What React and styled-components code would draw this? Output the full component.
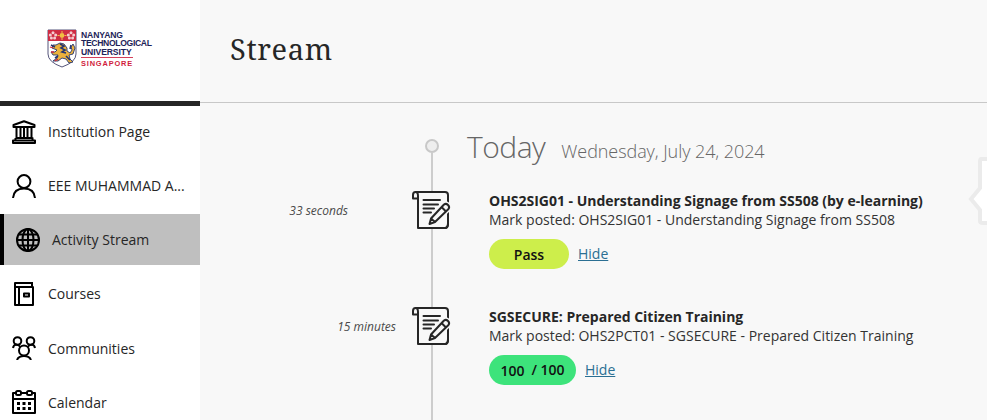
import React from "react";
import styled, { createGlobalStyle, css } from "styled-components";

const GlobalStyle = createGlobalStyle`
  * { box-sizing: border-box; }
  body { margin: 0; background: #f8f8f8; overflow: hidden; }
`;

const Page = styled.div`
  display: grid;
  grid-template-columns: 200px 1fr;
  width: 987px;
  height: 420px;
  overflow: hidden;
  position: relative;
  background: #f8f8f8;
  color: #262626;
  font-family: "Open Sans", "Noto Sans", sans-serif;
  font-size: 14px;
`;

const Sidebar = styled.aside`
  background: #fff;
  height: 420px;
  overflow: hidden;
`;

const Brand = styled.div`
  display: flex;
  height: 106px;
  padding: 29px 0 0 47px;
  gap: 4px;
  border-bottom: 5px solid #262626;
`;

const BrandText = styled.div`
  display: flex;
  flex-direction: column;
  align-items: flex-start;
  padding-top: 2px;
  color: #1d2358;
  font: 700 8.6px/8.3px "Liberation Sans", sans-serif;
  white-space: nowrap;
`;

const BrandLine = styled.span`
  letter-spacing: ${(p) => p.$spacing}px;
`;

const BrandCity = styled.span`
  margin-top: 1px;
  padding-top: 2px;
  border-top: 1px solid #d4405a;
  color: #d01c3c;
  font-size: 7.4px;
  letter-spacing: 0.85px;
  line-height: 8px;
`;

const Nav = styled.nav`
  display: flex;
  flex-direction: column;
  gap: 3.15px;
`;

const NavItem = styled.a`
  display: flex;
  flex: none;
  align-items: center;
  gap: 12px;
  height: 51px;
  padding-left: 12px;
  white-space: nowrap;
  ${(p) => p.$active && css`
    background: #bfbfbf;
    border-left: 4px solid #000;
  `}
`;

const NavLabel = styled.span``;

const LineIcon = styled.svg`
  flex: none;
  width: 24px;
  height: 24px;
  fill: none;
  stroke: #000;
  stroke-width: 2;
  stroke-linejoin: round;
`;

const Main = styled.main`
  display: flex;
  flex-direction: column;
`;

const Header = styled.header`
  height: 103px;
  padding: 29px 0 0 30px;
  border-bottom: 1px solid #c8c8c8;
`;

const Title = styled.h1`
  margin: 0;
  font: 400 29px/40px "Noto Serif", "DejaVu Serif", serif;
  font-stretch: condensed;
  letter-spacing: 0.65px;
`;

const Timeline = styled.section`
  position: relative;
  flex: 1;
  &::before {
    content: "";
    position: absolute;
    left: 231px;
    top: 50px;
    bottom: 0;
    width: 2px;
    background: #cdcdcd;
  }
`;

const DayRow = styled.div`
  display: flex;
  align-items: baseline;
  height: 86px;
  padding: 24px 0 0 225px;
  color: #666;
  font-weight: 300;
  white-space: nowrap;
`;

const DayDot = styled.span`
  position: relative;
  align-self: flex-start;
  width: 14px;
  height: 14px;
  margin: 12px 28px 0 0;
  border: 2px solid #c8c8c8;
  border-radius: 50%;
  background: #eee;
`;

const DayName = styled.span`
  font-size: 30px;
  line-height: 40px;
  letter-spacing: -0.5px;
`;

const DayDate = styled.span`
  margin-left: 16px;
  font-size: 18px;
  letter-spacing: -0.07px;
`;

const Entry = styled.article`
  display: grid;
  grid-template-columns: 196px 39px 1fr;
  height: 116px;
`;

const Age = styled.time`
  padding-right: ${(p) => (p.$early ? 48 : 0)}px;
  margin-top: 14px;
  font-size: 12px;
  font-style: italic;
  line-height: 16px;
  text-align: right;
  color: #4a4a4a;
`;

const EntryIcon = styled.svg`
  position: relative;
  width: 40px;
  height: 40px;
  margin: 1px 0 0 16px;
  fill: none;
  stroke: #262626;
  stroke-width: 2;
  stroke-linejoin: round;
  stroke-linecap: round;
`;

const EntryBody = styled.div`
  padding: 2px 0 0 54px;
  white-space: nowrap;
`;

const EntryTitle = styled.h2`
  margin: 0;
  font-size: 14px;
  font-weight: 700;
  line-height: 19px;
  letter-spacing: -0.015px;
`;

const EntryText = styled.p`
  margin: 0;
  line-height: 19px;
  color: #333;
`;

const Actions = styled.div`
  display: flex;
  align-items: center;
  gap: 9px;
  margin-top: 10px;
`;

const Grade = styled.span`
  display: flex;
  justify-content: center;
  align-items: center;
  gap: 7px;
  width: ${(p) => p.$width}px;
  height: 30px;
  padding-top: 1px;
  border-radius: 15px;
  background: ${(p) => p.$color};
  color: #111;
  font-weight: 600;
`;

const GradeTotal = styled.span`
  padding-bottom: 2px;
`;

const HideLink = styled.a`
  color: #2b6f93;
  text-decoration: underline;
  text-underline-offset: 1px;
  margin-top: -1px;
`;

const Peek = styled.svg`
  position: absolute;
  right: 0;
  top: 150px;
  width: 20px;
  height: 80px;
`;

const Crest = () => (
  <svg width="30" height="39" viewBox="0 0 30 39">
    <path d="M1 1H29V25Q29 33 15 38Q1 33 1 25Z" fill="#fff" stroke="#55557a" strokeWidth="1" />
    <path d="M1 1H29V12H1Z" fill="#cf2c43" />
    <g fill="#f4cdd0">
      <circle cx="6" cy="3.700" r="1.500" /><circle cx="3.300" cy="6" r="1.500" /><circle cx="8.700" cy="6" r="1.500" />
      <circle cx="4.400" cy="9" r="1.500" /><circle cx="7.600" cy="9" r="1.500" />
      <circle cx="24" cy="3.700" r="1.500" /><circle cx="21.300" cy="6" r="1.500" /><circle cx="26.700" cy="6" r="1.500" />
      <circle cx="22.400" cy="9" r="1.500" /><circle cx="25.600" cy="9" r="1.500" />
    </g>
    <circle cx="15" cy="6.500" r="2.400" fill="#f1bd43" />
    <path d="M15 2v2m0 5v2M10.500 6.500h2m5 0h2" stroke="#f1bd43" />
    <path d="M9 16l4-2 4 1 3 4 0 3 3 2 2-3-1-3 2-3 2 4-2 6-4 1 1 4 3 3-4 1-3-4-4-1-4 3-5 0 4-3 1-3-5 0-2-3 4 0 2-2-5-2 1-3z" fill="#ebb13d" stroke="#25356f" strokeWidth=".9" />
    <path d="M13 15l4 2-3 2 4 2-3 2 4 1M4 16l4 2M8 29l3-2M19 27l4 4M24 16l-1 4" fill="none" stroke="#25356f" strokeWidth="1.600" />
    <path d="M3 18l3 1M4 23l3 0M8 32l3-2" stroke="#cf2c43" strokeWidth="1.300" />
  </svg>
);

const InstitutionIcon = () => (
  <LineIcon viewBox="0 0 24 24">
    <path d="M1.500 5L12 1.200L22.500 5V7H1.500ZM4.500 7V18M8.500 8V18M12 8V18M15.500 8V18M19.500 7V18M3.500 18H20.500V20M3.500 18V20M1 20.500H23V23H1Z" />
  </LineIcon>
);
const PersonIcon = () => (
  <LineIcon viewBox="0 0 24 24">
    <circle cx="12" cy="7.500" r="6.400" /><path d="M1 24C1.500 17.500 6 14.500 12 14.500S22.500 17.500 23 24" />
  </LineIcon>
);
const GlobeIcon = () => (
  <LineIcon viewBox="0 0 24 24">
    <circle cx="12" cy="12" r="11" /><ellipse cx="12" cy="12" rx="5.500" ry="11" />
    <path d="M12 1V23M1 12H23M3 6.500H21M3 17.500H21" />
  </LineIcon>
);
const BookIcon = () => (
  <LineIcon viewBox="0 0 24 24">
    <path d="M21 5H3V1H21M20 1V5H21V23H3V4M7 5V23M12 11.500H17V14.500H12Z" />
  </LineIcon>
);
const GroupIcon = () => (
  <LineIcon viewBox="0 0 24 24">
    <circle cx="5.500" cy="5" r="3.800" /><circle cx="18.500" cy="5" r="3.800" />
    <circle cx="12" cy="14.500" r="5" />
    <path d="M1 12Q1.500 9 4 8.500Q6.500 8.500 8.500 11M23 12Q22.500 9 20 8.500Q17.500 8.500 15.500 11M5 24Q6.500 20 12 20T19 24" />
  </LineIcon>
);
const CalendarIcon = () => (
  <LineIcon viewBox="0 0 24 24">
    <path d="M4 3H1V23H23V3H20M9 3H15M1 9H23" />
    <rect x="4" y="1" width="5" height="4" rx="1.500" /><rect x="15" y="1" width="5" height="4" rx="1.500" />
    <path d="M5 13.500H8M10.500 13.500H13.500M16 13.500H19M5 18.500H8M10.500 18.500H13.500M16 18.500H19" strokeWidth="3" />
  </LineIcon>
);

const GradeIcon = () => (
  <EntryIcon viewBox="0 0 40 40">
    <path d="M4 2H33Q36 2 36 5V33Q36 38 33 38H6V6Q6 2 3.500 2T1 5V8.500H6" fill="#f8f8f8" />
    <path d="M11.500 10H28M11.500 14.500H26M11.500 18.500H22M11.500 22.500H19" />
    <path d="M32 14.500Q34 13 36 15T36.500 19L23 32L17.500 34L19 28.500Z" fill="#f8f8f8" stroke="#f8f8f8" strokeWidth="5" />
    <path d="M36 26V34Q36 38 33 38H18" />
    <path d="M32 14.500Q34 13 36 15T36.500 19L23 32L17.500 34L19 28.500ZM29.500 17L34 21.500M19 28.500L23 32" />
  </EntryIcon>
);

const navItems = [
  { label: "Institution Page", Icon: InstitutionIcon },
  { label: "EEE MUHAMMAD A...", Icon: PersonIcon },
  { label: "Activity Stream", Icon: GlobeIcon, active: true },
  { label: "Courses", Icon: BookIcon },
  { label: "Communities", Icon: GroupIcon },
  { label: "Calendar", Icon: CalendarIcon },
];

const entries = [
  {
    age: "33 seconds", early: true,
    title: "OHS2SIG01 - Understanding Signage from SS508 (by e-learning)",
    text: "Mark posted: OHS2SIG01 - Understanding Signage from SS508",
    grade: "Pass", color: "#cdee4b", width: 80,
  },
  {
    age: "15 minutes",
    title: "SGSECURE: Prepared Citizen Training",
    text: "Mark posted: OHS2PCT01 - SGSECURE - Prepared Citizen Training",
    grade: "100", total: "/ 100", color: "#3de37b", width: 87,
  },
];

export default function App() {
  return (
    <Page>
      <GlobalStyle />
      <Sidebar>
        <Brand>
          <Crest />
          <BrandText>
            <BrandLine $spacing={-0.1}>NANYANG</BrandLine>
            <BrandLine $spacing={-0.33}>TECHNOLOGICAL</BrandLine>
            <BrandLine $spacing={-0.1}>UNIVERSITY</BrandLine>
            <BrandCity>SINGAPORE</BrandCity>
          </BrandText>
        </Brand>
        <Nav>
          {navItems.map(({ label, Icon, active }) => (
            <NavItem key={label} $active={active}>
              <Icon />
              <NavLabel>{label}</NavLabel>
            </NavItem>
          ))}
        </Nav>
      </Sidebar>
      <Main>
        <Header><Title>Stream</Title></Header>
        <Timeline>
          <DayRow>
            <DayDot />
            <DayName>Today</DayName>
            <DayDate>Wednesday, July 24, 2024</DayDate>
          </DayRow>
          {entries.map((e) => (
            <Entry key={e.title}>
              <Age $early={e.early}>{e.age}</Age>
              <GradeIcon />
              <EntryBody>
                <EntryTitle>{e.title}</EntryTitle>
                <EntryText>{e.text}</EntryText>
                <Actions>
                  <Grade $width={e.width} $color={e.color}>
                    <span>{e.grade}</span>
                    {e.total && <GradeTotal>{e.total}</GradeTotal>}
                  </Grade>
                  <HideLink>Hide</HideLink>
                </Actions>
              </EntryBody>
            </Entry>
          ))}
        </Timeline>
      </Main>
      <Peek viewBox="0 0 20 80">
        <path d="M22 9H14Q13 9 13 12V38L4 49L13 60V71Q13 73 16 73H22Z" fill="#fff" stroke="#ebebeb" strokeWidth="4" />
      </Peek>
    </Page>
  );
}
